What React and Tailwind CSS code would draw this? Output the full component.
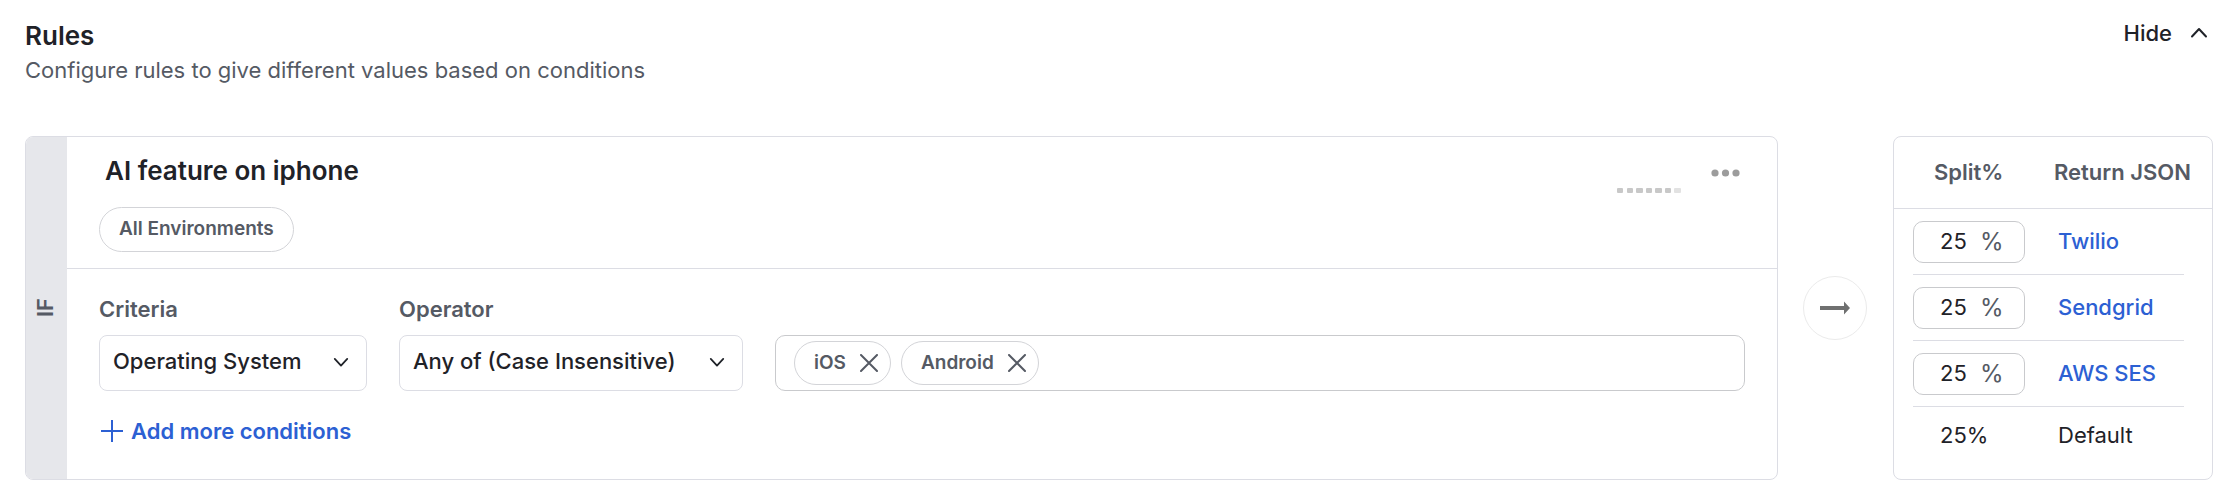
import React, { useState } from 'react';

const CRITERIA = ['Operating System', 'App Version', 'Country'];
const OPERATORS = ['Any of (Case Insensitive)', 'None of', 'Contains'];

const returnValues = [
  { id: 'twilio', name: 'Twilio' },
  { id: 'sendgrid', name: 'Sendgrid' },
  { id: 'aws-ses', name: 'AWS SES' },
];

const ChevronIcon = ({ className }) => (
  <svg className={className} width="18" height="18" viewBox="0 0 18 18" fill="none" stroke="currentColor" strokeWidth="2" strokeLinecap="round" strokeLinejoin="round">
    <path d="M2 5.5 9 13l7-7.5" />
  </svg>
);

const CloseIcon = () => (
  <svg width="18" height="18" viewBox="0 0 18 18" fill="none" stroke="currentColor" strokeWidth="2" strokeLinecap="round">
    <path d="m1 1 16 16M17 1 1 17" />
  </svg>
);

const SelectField = ({ id, label, options, className }) => (
  <div className={className}>
    <label htmlFor={id} className="block text-[22px] leading-7 font-semibold text-[#555a64]">
      {label}
    </label>
    <div className="relative mt-3">
      <select
        id={id}
        className="block h-14 w-full appearance-none rounded-lg border border-[#dcdde4] bg-white pr-12 pb-1 pl-[13px] text-[22px] font-medium text-[#1f2228]"
      >
        {options.map((option) => (
          <option key={option}>{option}</option>
        ))}
      </select>
      <ChevronIcon className="pointer-events-none absolute top-[19px] right-[18px] size-4" />
    </div>
  </div>
);

const SplitTable = () => {
  const [splits, setSplits] = useState({ twilio: '25', sendgrid: '25', 'aws-ses': '25' });

  return (
    <div className="w-[320px] shrink-0 rounded-lg border border-[#dcdde4]">
      <table className="w-full table-fixed border-separate border-spacing-0 text-left">
        <thead>
          <tr className="text-[22px] text-[#555a64]">
            <th className="h-[72px] w-[144px] border-b border-[#dcdde4] pl-10 font-semibold">Split%</th>
            <th className="border-b border-[#dcdde4] pl-4 font-semibold">Return JSON</th>
          </tr>
        </thead>
        <tbody className="text-[22px]">
          {returnValues.map(({ id, name }) => (
            <tr key={id}>
              <td className="p-0 pl-[19px]">
                <div className="flex h-[66px] items-center border-b border-[#dcdde4]">
                  <label className="flex h-[42px] w-28 items-center rounded-[10px] border border-[#c9cacd] pl-[26px]">
                    <input
                      aria-label={`${name} split`}
                      className="w-10 bg-transparent text-[#1f2228] outline-none"
                      value={splits[id]}
                      onChange={(e) => setSplits({ ...splits, [id]: e.target.value })}
                    />
                    <span className="text-2xl text-[#555a64]">%</span>
                  </label>
                </div>
              </td>
              <td className="p-0 pr-7">
                <div className="flex h-[66px] items-center border-b border-[#dcdde4] pl-5">
                  <a href="#" className="font-medium text-[#2c60d3]">{name}</a>
                </div>
              </td>
            </tr>
          ))}
          <tr className="text-[#1f2228]">
            <td className="h-14 pl-[46px]">25%</td>
            <td className="pl-5">Default</td>
          </tr>
        </tbody>
      </table>
    </div>
  );
};

const App = () => {
  const [open, setOpen] = useState(true);
  const [tags, setTags] = useState(['iOS', 'Android']);

  return (
    <main className="bg-white pt-5 pr-[21px] pb-5 pl-[25px] font-['Inter',sans-serif] text-[#1f2228]">
      <header className="flex items-start justify-between">
        <div>
          <h1 className="text-[26px] leading-8 font-semibold">Rules</h1>
          <p className="mt-1 text-[22px] leading-7 text-[#555a64]">
            Configure rules to give different values based on conditions
          </p>
        </div>
        <button
          type="button"
          onClick={() => setOpen(!open)}
          className="flex items-center gap-[18px] pr-[5px] text-[22px] leading-[26px] font-medium"
        >
          Hide
          <ChevronIcon className={open ? 'rotate-180' : ''} />
        </button>
      </header>

      {open && (
        <div className="mt-[52px] flex">
          <section className="flex min-h-[344px] min-w-0 flex-1 overflow-hidden rounded-lg border border-[#dcdde4]">
            {/* IF rail */}
            <div className="flex w-[41px] shrink-0 items-center justify-center bg-[#e6e7eb] pr-1">
              <span className="rotate-180 text-[22px] leading-7 font-semibold text-[#555a64] [writing-mode:vertical-rl]">IF</span>
            </div>

            <div className="min-w-0 flex-1">
              <div className="flex h-[132px] justify-between border-b border-[#dcdde4] pr-9 pl-8">
                <div>
                  <h2 className="mt-4 ml-[6px] text-[26px] leading-9 font-semibold">AI feature on iphone</h2>
                  <span className="mt-[18px] flex h-[45px] w-fit items-center rounded-full border border-[#d3d4d8] px-[19px] text-[19px] font-semibold text-[#555a64]">
                    All Environments
                  </span>
                </div>
                <div className="flex items-start gap-7">
                  <svg className="mt-[51px]" width="66" height="5" viewBox="0 0 66 5" fill="#c8c8c8">
                    <rect x="0" width="6" height="5" rx="1" />
                    <rect x="10" width="6" height="5" rx="1" />
                    <rect x="19" width="7" height="5" rx="1" />
                    <rect x="29" width="6" height="5" rx="1" />
                    <rect x="38" width="7" height="5" rx="1" />
                    <rect x="48" width="6" height="5" rx="1" />
                    <rect x="57" width="7" height="5" rx="1" fill="#e2e2e2" />
                  </svg>
                  <button type="button" aria-label="Rule options" className="mt-8">
                    <svg width="30" height="8" viewBox="0 0 30 8" fill="#9c9c9c">
                      <circle cx="4" cy="4" r="3.6" />
                      <circle cx="14.5" cy="4" r="3.6" />
                      <circle cx="25" cy="4" r="3.6" />
                    </svg>
                  </button>
                </div>
              </div>

              <div className="pt-[26px] pr-8 pl-8">
                <div className="flex items-end gap-8">
                  <SelectField id="criteria" label="Criteria" options={CRITERIA} className="w-[268px]" />
                  <SelectField id="operator" label="Operator" options={OPERATORS} className="w-[344px]" />
                  <div className="flex h-14 min-w-0 flex-1 items-center gap-[10px] rounded-[10px] border border-[#c9cacd] px-[18px]">
                    {tags.map((tag) => (
                      <span
                        key={tag}
                        className="flex h-11 items-center gap-[14px] rounded-full border border-[#d3d4d8] pr-3 pl-[19px] text-[19px] font-semibold text-[#555a64]"
                      >
                        {tag}
                        <button type="button" aria-label={`Remove ${tag}`} onClick={() => setTags(tags.filter((t) => t !== tag))}>
                          <CloseIcon />
                        </button>
                      </span>
                    ))}
                  </div>
                </div>
                <button type="button" className="mt-[26px] flex items-center gap-2 pl-[2px] text-[22px] leading-7 font-semibold text-[#2c60d3]">
                  <svg width="22" height="22" viewBox="0 0 22 22" fill="none" stroke="currentColor" strokeWidth="2">
                    <path d="M11 0v22M0 11h22" />
                  </svg>
                  Add more conditions
                </button>
              </div>
            </div>
          </section>

          <div className="mr-[26px] ml-[25px] flex size-16 shrink-0 items-center justify-center self-center rounded-full border border-[#ebebeb]">
            <svg width="30" height="14" viewBox="0 0 30 14" fill="#6f7070">
              <path d="M0 5h24V0.5L30 7l-6 6.500V9H0z" />
            </svg>
          </div>

          <SplitTable />
        </div>
      )}
    </main>
  );
};

export default App;
